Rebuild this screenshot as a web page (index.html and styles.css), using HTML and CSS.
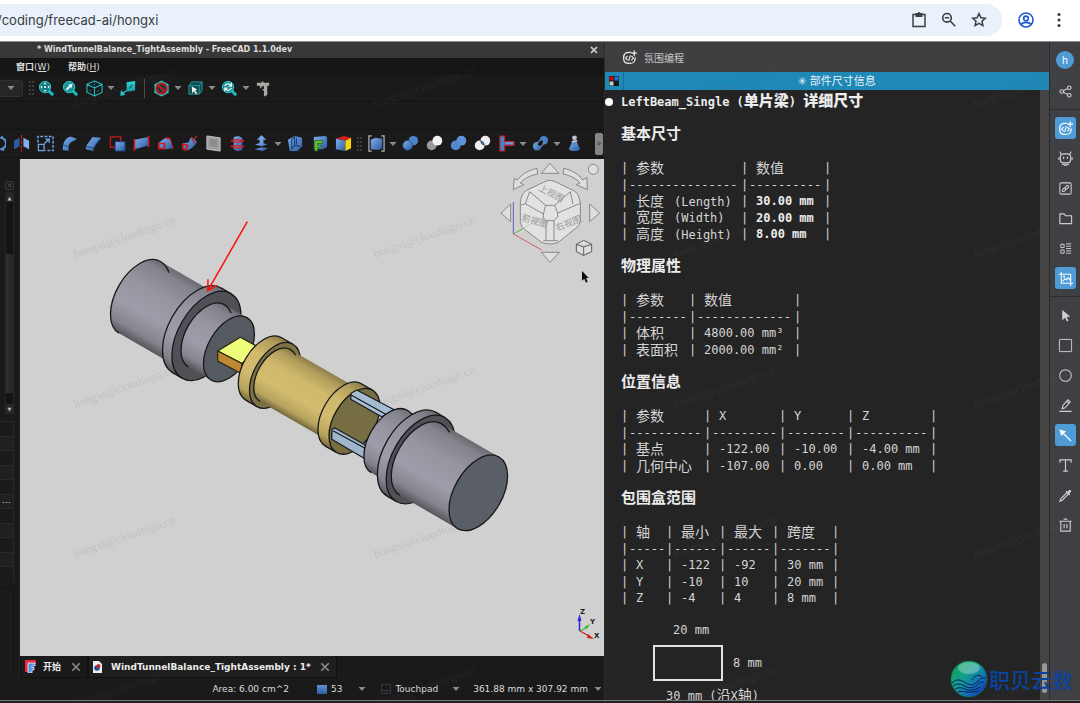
FILE: index.html
```html
<!DOCTYPE html>
<html lang="zh-CN">
<head>
<meta charset="utf-8">
<title>FreeCAD - hongxi</title>
<link rel="stylesheet" href="styles.css">
</head>
<body>
<svg class="defs" aria-hidden="true">
  <defs>
    <linearGradient id="blue" x1="0" y1="0" x2="1" y2="1"><stop offset="0" stop-color="#7fb0ea"/><stop offset="1" stop-color="#2a5ba3"/></linearGradient>
    <linearGradient id="cyan" x1="0" y1="0" x2="0" y2="1"><stop offset="0" stop-color="#2fe0e6"/><stop offset="1" stop-color="#129ba3"/></linearGradient>
    <linearGradient id="steel" x1="0" y1="0" x2="0" y2="1"><stop offset="0" stop-color="#6b6a71"/><stop offset=".1" stop-color="#84838c"/><stop offset=".35" stop-color="#9695a0"/><stop offset=".65" stop-color="#9d9ca8"/><stop offset=".88" stop-color="#85848e"/><stop offset="1" stop-color="#55555a"/></linearGradient>
    <linearGradient id="brass" x1="0" y1="0" x2="0" y2="1"><stop offset="0" stop-color="#8c7d49"/><stop offset=".12" stop-color="#b09d5b"/><stop offset=".35" stop-color="#d0b96c"/><stop offset=".65" stop-color="#d3bc6e"/><stop offset=".88" stop-color="#b7a35e"/><stop offset="1" stop-color="#73683d"/></linearGradient>
    <linearGradient id="globe" x1="0" y1="0" x2="1" y2="1"><stop offset="0" stop-color="#0aa04c"/><stop offset=".4" stop-color="#12a08e"/><stop offset=".7" stop-color="#126cb8"/><stop offset="1" stop-color="#0a1c9c"/></linearGradient>
    <symbol id="code" viewBox="0 0 16 16"><g fill="none" stroke="currentColor" stroke-linecap="round" stroke-linejoin="round"><path stroke-width="1.3" d="M9.5 2.6C5 2 1.7 3 1.7 8.600c0 4.900 2 5.700 6.100 5.700s6.400-.9 6.400-6"/><path stroke-width="1.200" d="M5.600 6.700 3.800 8.600l1.800 1.900M10.400 6.700l1.800 1.900-1.800 1.900M8.700 6.200l-1.400 4.900"/><path stroke-width="1.3" d="M13 1v5M10.600 3.400h5"/></g></symbol>
    <symbol id="arrow" viewBox="0 0 8 6"><path d="M.5 1h7L4 5z" fill="#8c8c8c"/></symbol>
  </defs>
</svg>

<header class="browser">
  <div class="address">
    <input class="url" aria-label="Address" value="/coding/freecad-ai/hongxi">
    <button class="bbtn" aria-label="Clipboard"><svg width="18" height="18" viewBox="0 0 18 18"><path fill="none" stroke="#3c3f43" stroke-width="1.500" d="M3 3.500h12v12H3z"/><path fill="#3c3f43" d="M5.500 2h2.200a1.400 1.400 0 0 1 2.600 0h2.200v4h-7z"/></svg></button>
    <button class="bbtn" aria-label="Zoom out"><svg width="18" height="18" viewBox="0 0 18 18"><g fill="none" stroke="#3c3f43" stroke-width="1.600"><circle cx="7" cy="6.800" r="4.300"/><path d="m10.200 10 5 5.200M4.800 6.800h4.400"/></g></svg></button>
    <button class="bbtn" aria-label="Bookmark"><svg width="18" height="18" viewBox="0 0 18 18"><path fill="none" stroke="#3c3f43" stroke-width="1.500" d="m9 2.600 1.900 4.100 4.400.5-3.300 3 .9 4.400L9 12.400l-3.900 2.200.9-4.400-3.300-3 4.400-.5z"/></svg></button>
  </div>
  <button class="bbtn profile" aria-label="Profile"><svg width="18" height="18" viewBox="0 0 18 18"><g fill="none" stroke="#1b57d0" stroke-width="1.600"><circle cx="9" cy="9" r="7"/><circle cx="9" cy="7.400" r="2.300"/><path d="M3.800 13.400c2.900-2.700 7.500-2.700 10.400 0"/></g></svg></button>
  <button class="bbtn more" aria-label="Menu"><svg width="6" height="18" viewBox="0 0 6 18"><g fill="#3c3f43"><circle cx="3" cy="3.500" r="1.600"/><circle cx="3" cy="9" r="1.600"/><circle cx="3" cy="14.500" r="1.600"/></g></svg></button>
</header>

<main class="workspace">
  <section class="cad">
    <div class="titlebar"><h1>* WindTunnelBalance_TightAssembly - FreeCAD 1.1.0dev</h1><button class="close" aria-label="Close window"><svg width="8" height="8" viewBox="0 0 8 8"><path d="m1 1 6 6M7 1 1 7" stroke="#d6d6d6" stroke-width="1.600"/></svg></button></div>
    <nav class="menubar"><button>窗口<span>(<u>W</u>)</span></button><button>帮助<span>(<u>H</u>)</span></button></nav>

    <div class="toolbar first">
      <button class="combo" aria-label="Workbench"><svg width="8" height="6"><use href="#arrow"/></svg></button>
      <i class="grip"></i>
      <button class="tool" aria-label="Fit all"><svg viewBox="0 0 18 18"><path d="m10 10 6 6" stroke="#1ab9c0" stroke-width="3.200"/><circle cx="7.500" cy="7.500" r="6" fill="#15787c" stroke="#27d3da"/><path d="m7.500 2.500 1.700 2H5.800zM7.500 12.500l1.700-2H5.800zM2.500 7.500l2-1.700v3.400zM12.500 7.500l-2-1.700v3.400zM6.500 6.500h2v2h-2z" fill="#e8f6f6"/></svg></button>
      <button class="tool" aria-label="Fit selection"><svg viewBox="0 0 18 18"><path d="m10 10 6 6" stroke="#1ab9c0" stroke-width="3.200"/><circle cx="7.500" cy="7.500" r="6" fill="#1f9298" stroke="#27d3da"/><path d="M11 4 6.500 5l1.200 1.200L4 9.500 5.500 11l3.500-3.500 1.200 1.200z" fill="#f2fafa"/></svg></button>
      <button class="tool" aria-label="Standard view"><svg viewBox="0 0 18 18"><path fill="none" stroke="#22b7bd" stroke-width="1.200" stroke-linejoin="round" d="M9 1 17 4.500v8.500L9 17 1 13V4.500zM1 4.500 9 8.500l8-4M9 8.500V17"/><path stroke="#22b7bd" stroke-dasharray="1.500 1.500" d="M9 1v8M4 10.500l2 2M12 12l2-1.500"/></svg></button>
      <button class="drop" aria-label="View options"><svg width="8" height="6"><use href="#arrow"/></svg></button>
      <button class="tool" aria-label="Align to selection"><svg viewBox="0 0 18 18"><path d="M7 2.500 16 1v10l-9 1.500z" fill="url(#cyan)"/><path d="m10 9 3-4" stroke="#0d5c60" stroke-width="1.300"/><path d="M7 11 3 14M1.500 12l3 3.500-3.500.5z" stroke="#26cbd2" stroke-width="1.300" fill="#26cbd2"/></svg></button>
      <i class="rule"></i>
      <button class="tool" aria-label="Draw style"><svg viewBox="0 0 18 18"><path d="m9 .500 7.500 4v9L9 17.500l-7.500-4v-9z" fill="#22c9d0"/><circle cx="9" cy="9" r="5.500" fill="#22393b" stroke="#bd1c1c" stroke-width="2.200"/><path d="m5 5 8 8" stroke="#bd1c1c" stroke-width="2.200"/></svg></button>
      <button class="drop" aria-label="Style options"><svg width="8" height="6"><use href="#arrow"/></svg></button>
      <button class="tool" aria-label="Bounding box"><svg viewBox="0 0 18 18"><path d="M5 2h11v9l-3 4H2V6z" fill="#16494c" stroke="#219ca2"/><path d="M2 6h11l3-4M13 6v9" fill="none" stroke="#219ca2"/><path d="m5 7 6 3-2.500.8L11 14l-1.500 1-2.200-3L5.500 14z" fill="#f4f4f4"/></svg></button>
      <button class="drop" aria-label="Selection options"><svg width="8" height="6"><use href="#arrow"/></svg></button>
      <button class="tool" aria-label="Sync view"><svg viewBox="0 0 18 18"><path d="m10 10 6 6" stroke="#1ab9c0" stroke-width="3.200"/><circle cx="7.500" cy="7.500" r="6" fill="#1c8b90" stroke="#27d3da"/><path d="M4 6.500c1-3 5-3 6.500-1M11 8.500c-1 3-5 3-6.500 1M11 3v3.500H8M4 12V8.500h3" fill="none" stroke="#eaf8f8" stroke-width="1.300"/></svg></button>
      <button class="drop" aria-label="Sync options"><svg width="8" height="6"><use href="#arrow"/></svg></button>
      <button class="tool" aria-label="Measure"><svg viewBox="0 0 18 18"><path d="M2 3h5V1.500h2V3h6v3h-2v10l-3.500 1.500V11H8V9.500h1.500v-3H7V8l-1.500 1L5 6H2z" fill="#aaa9a4"/></svg></button>
    </div>
    <div class="toolbar blank"></div>
    <div class="toolbar third">
      <button class="tool" aria-label="Revolve"><svg viewBox="0 0 18 18"><path d="M12 3a6 6 0 1 1 0 12M12 15l4 1M12 3l3-1" fill="none" stroke="#5d95dc" stroke-width="2"/></svg></button>
      <button class="tool" aria-label="Mirror"><svg viewBox="0 0 18 18"><path d="m1 6 6-3v9l-6 3z" fill="#2d5c9e"/><path d="m11 3 6 3v9l-6-3z" fill="#7fb0ea"/><path d="M9 0v18" stroke="#b91c1c" stroke-width="1.500" stroke-dasharray="4 1.500"/></svg></button>
      <button class="tool" aria-label="Scale"><svg viewBox="0 0 18 18"><path d="M1 8V1.500h16v15H9" fill="none" stroke="#6da2e4" stroke-width="1.600" stroke-dasharray="3 1.500"/><path d="M1.500 10h6v6.500h-6zM8 9l4-4M9 4.500h4v4" fill="none" stroke="#6da2e4" stroke-width="1.400"/></svg></button>
      <button class="tool" aria-label="Fillet"><svg viewBox="0 0 18 18"><path d="M2 16V12C3 7 5 3 10 1.500L17 4l-3 2c-4 1-6 4-6 7v4z" fill="url(#blue)"/><path d="M2 11c2 0 4 0 6 2" fill="none" stroke="#1c4581"/></svg></button>
      <button class="tool" aria-label="Chamfer"><svg viewBox="0 0 18 18"><path d="M1 12 8 2l9 1-3 4-5 7v3l-8-2z" fill="url(#blue)"/><path d="m1 12 8 2 6-9" fill="none" stroke="#1c4581"/></svg></button>
      <button class="tool" aria-label="Make face"><svg viewBox="0 0 18 18"><path d="M1.500 2h11v11h-11z" fill="none" stroke="#c01a20" stroke-width="1.400"/><path d="M6.500 7H17v10H6.500z" fill="url(#blue)" stroke="#183e75"/></svg></button>
      <button class="tool" aria-label="Ruled surface"><svg viewBox="0 0 18 18"><path d="m2 5 14-3v9L2 15z" fill="url(#blue)"/><path d="M1.500 4v13M16.500 1v12" stroke="#cb1b22" stroke-width="1.700"/></svg></button>
      <button class="tool" aria-label="Loft"><svg viewBox="0 0 18 18"><path d="m2 8 7-5 5 1 3 10-8 1-7-1z" fill="url(#blue)"/><path d="M2 9h6v5.500H2zM9 3l5 1" fill="none" stroke="#cb1b22" stroke-width="1.800"/><path d="m14 4 3 11" stroke="#cb1b22"/></svg></button>
      <button class="tool" aria-label="Sweep"><svg viewBox="0 0 18 18"><path d="m1 9 7-1c1-2 1-4 3-6l6 5c-2 4-5 7-9 9l-6-1z" fill="url(#blue)"/><path d="m2 10 5 1-2 5-3-2z" fill="none" stroke="#cb1b22" stroke-width="2"/><path d="m11 3 4 6M14 4l3-3" stroke="#cb1b22" stroke-width="1.300"/></svg></button>
      <button class="tool" aria-label="Section"><svg viewBox="0 0 18 18"><path d="m2 1 14 2v14L2 15z" fill="#a0a0a0" stroke="#c3c3c3"/><path d="m5 4 8 1v8l-8-1z" fill="#8c8c8c"/></svg></button>
      <button class="tool" aria-label="Cross sections"><svg viewBox="0 0 18 18"><path d="m5 2 5-1 4 2v13l-5 1-4-2z" fill="url(#blue)"/><path d="m2 6 6-1 8 1-7 2zM2 12l6-1 8 1-7 2z" fill="none" stroke="#ce2128" stroke-width="1.400"/></svg></button>
      <button class="tool" aria-label="Offset"><svg viewBox="0 0 18 18"><path d="m9 0 5 5h-3v4H7V5H4z" fill="#72a5e4"/><path d="m2 10 7-2 6 2-6 2zM2 15l7-2 7 1-6 3z" fill="url(#blue)"/></svg></button>
      <button class="drop" aria-label="Offset options"><svg width="8" height="6"><use href="#arrow"/></svg></button>
      <button class="tool" aria-label="Thickness"><svg viewBox="0 0 18 18"><path d="m1 5 7-4 8 2v9l-5 5H3z" fill="url(#blue)"/><path d="m5 5 3-3v9l-3 4zM8 11l6 1M10 3v7" fill="none" stroke="#1b4279" stroke-width="1.200"/></svg></button>
      <button class="tool" aria-label="Projection"><svg viewBox="0 0 18 18"><path d="m3 2 12-1 2 1v11l-5 2H3z" fill="url(#blue)"/><path d="M4 17V6h8v3H7v2h4v2H7v4z" fill="#61ca24" stroke="#225b10" stroke-width=".700"/></svg></button>
      <button class="tool" aria-label="Color per face"><svg viewBox="0 0 18 18"><path d="m1 4 8-3 8 2-6 3z" fill="#d81b1b"/><path d="m1 4 10 2v11L1 15z" fill="url(#blue)"/><path d="m11 6 6-3v11l-6 3z" fill="#f5d20a"/></svg></button>
      <i class="grip"></i>
      <button class="tool" aria-label="Compound"><svg viewBox="0 0 18 18"><path d="m3 5 5-2 7 1v10l-4 2-8-1z" fill="url(#blue)"/><path d="M4 1H1v16h3M14 1h3v16h-3" fill="none" stroke="#b4b4b4" stroke-width="1.300"/></svg></button>
      <button class="drop" aria-label="Compound options"><svg width="8" height="6"><use href="#arrow"/></svg></button>
      <button class="tool" aria-label="Boolean"><svg viewBox="0 0 18 18"><circle cx="12" cy="6" r="5" fill="#4f83c8"/><circle cx="6" cy="11" r="5.200" fill="url(#blue)" stroke="#1a3f76" stroke-width=".700"/></svg></button>
      <button class="tool" aria-label="Cut"><svg viewBox="0 0 18 18"><circle cx="6" cy="11" r="5.200" fill="#999"/><circle cx="12" cy="6" r="5.200" fill="#f1f1f1"/></svg></button>
      <button class="tool" aria-label="Union"><svg viewBox="0 0 18 18"><circle cx="12" cy="6" r="5.200" fill="#5e93d8"/><circle cx="6" cy="11" r="5.200" fill="#5488cd"/></svg></button>
      <button class="tool" aria-label="Intersection"><svg viewBox="0 0 18 18"><circle cx="6" cy="11" r="5.200" fill="#eee"/><circle cx="12" cy="6" r="5.200" fill="#eee"/><path d="M7 6a5.200 5.200 0 0 1 4 5A5.200 5.200 0 0 1 7 6z" fill="#4a80c8" stroke="#333" stroke-width=".700"/></svg></button>
      <button class="tool" aria-label="Join"><svg viewBox="0 0 18 18"><path d="M2 1h5v6h10v4H7v6H2z" fill="#4a80c8" stroke="#c61c22" stroke-width="1.200"/><path d="M8 8.500h8" stroke="#8bb8ee"/></svg></button>
      <button class="drop" aria-label="Join options"><svg width="8" height="6"><use href="#arrow"/></svg></button>
      <button class="tool" aria-label="Split"><svg viewBox="0 0 18 18"><circle cx="12.500" cy="5.500" r="4.500" fill="#4a80c8"/><circle cx="5.500" cy="12" r="4.500" fill="url(#blue)"/><circle cx="9" cy="9" r="3" fill="#222" stroke="#6da2e4"/><path d="m7 11 4-5" stroke="#111" stroke-width="2"/></svg></button>
      <button class="drop" aria-label="Split options"><svg width="8" height="6"><use href="#arrow"/></svg></button>
      <button class="tool" aria-label="Check geometry"><svg viewBox="0 0 18 18"><path d="M7 6h4l4 9-3 2H6l-3-2z" fill="url(#blue)"/><circle cx="9" cy="3" r="2.600" fill="#bdc3c9"/><path d="m6 7 6-1" stroke="#d9d9d9" stroke-width="1.500"/></svg></button>
      <button class="extend" aria-label="More tools">»</button>
    </div>

    <div class="stage">
      <aside class="dock">
        <button class="dockclose" aria-label="Close panel">×</button>
        <div class="scroll"><button aria-label="Scroll up">▲</button><i class="thumb"></i><button aria-label="Scroll down">▼</button></div>
        <div class="props"><i></i><i></i><i></i><i></i><i></i><i>…</i><i></i><i></i><i></i><i></i><i></i></div>
        <div class="dockfoot"></div>
      </aside>
      <div class="viewcol">
        <svg class="view" viewBox="20 159 584 497" role="img" aria-label="Wind tunnel balance assembly">
          <g transform="translate(478.3 492.800) rotate(30)" stroke-linejoin="round">
            <path fill="url(#steel)" d="M-390.900-41.400A23.900 41.400 0 0 0-390.900 41.400H-313V-41.400z"/>
            <path fill="none" stroke="#17171a" stroke-width="1.300" d="M-378-36Q-384-41.400-390.900-41.400A23.900 41.400 0 0 0-390.900 41.400"/>
            <path fill="url(#steel)" d="M-324.800-48.800A28.200 48.800 0 0 0-324.800 48.800H-313.900V-48.800z"/>
            <path fill="none" stroke="#17171a" stroke-width="1.300" d="M-313.900-48.800H-324.800A28.200 48.800 0 0 0-324.800 48.800H-313.900"/>
            <ellipse cx="-313.900" rx="28.200" ry="48.800" fill="#505156" stroke="#17171a" stroke-width="1.300"/>
            <path fill="url(#steel)" d="M-313.900-36A20.800 36 0 0 0-313.900 36H-287.900V-36z"/>
            <path fill="none" stroke="#17171a" stroke-width="1.300" d="M-304-32Q-309-36-313.900-36A20.800 36 0 0 0-313.900 36"/>
            <ellipse cx="-287.900" rx="20.800" ry="36" fill="#555a61" stroke="#17171a" stroke-width="1.300"/>
          </g>
          <g stroke="#252411" stroke-width="1.200" stroke-linejoin="round"><path d="m217.700 351 22.600-13.700 20 10.700-18.300 15.500z" fill="#efff7b"/><path d="m217.700 351 24.300 12.500V374l-24.300-13z" fill="#bd8935"/></g>
          <g transform="translate(478.3 492.800) rotate(30)">
            <path fill="url(#brass)" d="M-247.800-36A20.800 36 0 0 0-247.800 36H-234.800V-36z"/>
            <path fill="none" stroke="#17171a" stroke-width="1.300" d="M-234.800-36H-247.800A20.800 36 0 0 0-247.800 36H-234.800"/>
            <ellipse cx="-234.800" rx="20.800" ry="36" fill="#7d7244" stroke="#17171a" stroke-width="1.300"/>
            <path fill="url(#brass)" d="M-234.800-30A17.300 30 0 0 0-234.800 30H-150V-30z"/>
            <path fill="none" stroke="#17171a" stroke-width="1.300" d="M-227-28Q-230-30-234.800-30A17.300 30 0 0 0-234.800 30"/>
            <path fill="url(#brass)" d="M-155.800-36A20.800 36 0 0 0-155.800 36H-143V-36z"/>
            <path fill="none" stroke="#17171a" stroke-width="1.300" d="M-143-36H-155.800A20.800 36 0 0 0-155.800 36H-143"/>
            <ellipse cx="-143" rx="20.800" ry="36" fill="#766d42" stroke="#17171a" stroke-width="1.300"/>
          </g>
          <g stroke="#18191c" stroke-width="1.200" stroke-linejoin="round"><path d="m356.700 390 38 20-13 6.700-31-17.400.3-6z" fill="#a6bed4"/><path d="m332 429.300 3-1.300 32 18v14l-35.300-20.700z" fill="#9eb7cd"/><path d="m351 395 37 20.500M333 430.700l33 18" fill="none"/></g>
          <g transform="translate(478.3 492.800) rotate(30)">
            <path fill="url(#steel)" d="M-102.700-36A20.800 36 0 0 0-102.700 36H-70V-36z"/>
            <path fill="none" stroke="#17171a" stroke-width="1.300" d="M-92-32Q-97-36-102.700-36A20.800 36 0 0 0-102.700 36"/>
            <path fill="url(#steel)" d="M-76.800-48.500A28.200 48.500 0 0 0-76.800 48.500H-66.700V-48.500z"/>
            <path fill="none" stroke="#17171a" stroke-width="1.300" d="M-66.700-48.500H-76.800A28.200 48.500 0 0 0-76.800 48.500H-66.700"/>
            <ellipse cx="-66.700" rx="28" ry="48.500" fill="#505156" stroke="#17171a" stroke-width="1.300"/>
            <path fill="url(#steel)" d="M-66.700-41.400A23.900 41.400 0 0 0-66.700 41.400H0V-41.400z"/>
            <path fill="none" stroke="#17171a" stroke-width="1.300" d="M-55-38Q-61-41.400-66.700-41.400A23.900 41.400 0 0 0-66.700 41.400"/>
            <ellipse rx="23.900" ry="41.400" fill="#5a5e66" stroke="#17171a" stroke-width="1.300"/>
          </g>
          <path d="M247.300 221.700 207.800 290.700M208 279.300l-.2 11.400 9.500-5.400" fill="none" stroke="#fb1010" stroke-width="1.500"/>
          <g transform="translate(490 155) scale(.33333)" stroke="#777" stroke-width="2.500" fill="#dedede" stroke-linejoin="round">
            <path d="m180 25 27 30h-53zM180 322l-26-30h54zM33 174l29-27v53zM329 174l-30-27v53z"/><circle cx="310" cy="43" r="15"/>
            <path d="M141 40C115 46 95 58 82 75l-9-5-3 34 31-15-10-5c11-13 27-22 52-27zM221 40c26 6 46 18 57 35l13-7 1 36-33-15 11-5c-11-13-27-22-51-27z"/>
            <path fill="#e2e2e2" d="m110 106 56-27q14-6 28 0l57 28q16 8 20 38v55q-3 12-14 20l-52 42q-25 10-50 0l-50-38q-12-8-14-24v-55q2-30 19-39z"/>
            <path fill="none" d="m119 110 48 41h27l47-41M106 146l54 31 7-26M271 145l-68 29-9-23M160 177v12l8 8h24l11-12v-11M168 197v60M192 197v58M93 150l13-4 13-36M241 110l8 38M160 257h44"/>
            <path stroke="#4a4ac0" d="M70 141v96"/><path stroke="#3fae3f" d="m70 237 30-17"/><path stroke="#a3d9a3" d="m100 220 54-31"/><path stroke="#d04545" d="m70 237 85 48"/>
            <path d="m281 256 24 12v22l-24 11-22-11v-22zM259 268l22 8 24-8M281 276v25" stroke="#444"/>
            <path d="M276 348v29l7-6 5 12 5-3-5-11h8z" fill="#090909" stroke="none"/>
          </g>
          <g class="face"><text transform="translate(538 190) rotate(27)">上视图</text><text transform="translate(521 220) rotate(17)">前视图</text><text transform="translate(557 231) rotate(-21)">右视图</text></g>
          <path d="M579.500 631v-12" stroke="#2a2ad0" stroke-width="1.500"/><path d="m577.500 621 2-7 2 7z" fill="#2a2ad0"/><path d="m580 631 6-3" stroke="#30c030" stroke-width="1.300"/><path d="m584 627 6-3-3 5z" fill="#30c030"/><path d="m580 631 9 5" stroke="#d02020" stroke-width="1.300"/><path d="m588 634 6 5-7-1z" fill="#d02020"/>
          <g class="axes"><text x="580" y="614">Z</text><text x="590" y="624">Y</text><text x="594" y="638">X</text></g>
        </svg>
        <div class="tabs">
          <div class="tab start"><svg width="12" height="13" viewBox="0 0 12 13"><path d="M1 0h11v4H6v8H1z" fill="#e8283d"/><path d="M4 3h7v3H8v1.500h2V10H8v3H4z" fill="#4d94e4" stroke="#fff" stroke-width=".700"/></svg><button class="tabname">开始</button><button class="tabx" aria-label="Close tab"><svg width="10" height="10" viewBox="0 0 8 8"><path d="m1 1 6 6M7 1 1 7" stroke="#888" stroke-width="1.400"/></svg></button></div>
          <div class="tab doc"><svg width="9" height="12" viewBox="0 0 9 12"><path d="M0 0h6l3 3v9H0z" fill="#eee"/><circle cx="4" cy="7" r="2.800" fill="#214c9a"/><circle cx="5.500" cy="5" r="2" fill="#cf2328"/></svg><button class="tabname">WindTunnelBalance_TightAssembly : 1*</button><button class="tabx" aria-label="Close tab"><svg width="10" height="10" viewBox="0 0 8 8"><path d="m1 1 6 6M7 1 1 7" stroke="#888" stroke-width="1.400"/></svg></button></div>
        </div>
      </div>
    </div>
    <footer class="status">
      <span class="area">Area: 6.00 cm^2</span>
      <button class="stat notes"><i class="chip"></i>53<svg width="8" height="6"><use href="#arrow"/></svg></button>
      <button class="stat pad"><svg width="10" height="10" viewBox="0 0 10 10"><path d="M.500.500h9v9h-9zM.500 6.500h9M5 6.500v3" fill="none" stroke="#343a40"/></svg>Touchpad<svg width="8" height="6"><use href="#arrow"/></svg></button>
      <button class="stat dims">361.88 mm x 307.92 mm<svg width="8" height="6"><use href="#arrow"/></svg></button>
    </footer>
  </section>

  <section class="panel">
    <h2 class="panelhead"><svg width="15" height="15"><use href="#code"/></svg>氛围编程</h2>
    <div class="panelbar"><button class="swatch" aria-label="Sessions"><svg width="10" height="10" viewBox="0 0 10 10"><path d="M0 0h10v10H0z" fill="#101a20"/><path d="M.500.500h4v4h-4z" fill="#c40a0a"/><path d="M5.500.500h4v4h-4z" fill="#2077c8"/><path d="M.500 5.500h4v4h-4z" fill="#ccc"/></svg></button><span>✳ 部件尺寸信息</span></div>
    <div class="termwrap">
      <article class="term">
        <h3 class="part"><i class="bullet"></i><span>LeftBeam_Single (<b>单片梁</b>) <b>详细尺寸</b></span></h3>
        <h4>基本尺寸</h4>
        <table>
          <colgroup><col class="bar"><col class="w112"><col class="bar"><col class="w75"><col class="bar"></colgroup>
          <tr><td>|</td><th>参数</th><td>|</td><th>数值</th><td>|</td></tr>
          <tr class="dash"><td>|</td><td>---------------</td><td>|</td><td>----------</td><td>|</td></tr>
          <tr><td>|</td><th>长度<span>(Length)</span></th><td>|</td><td class="v strong">30.00 mm</td><td>|</td></tr>
          <tr><td>|</td><th>宽度<span>(Width)</span></th><td>|</td><td class="v strong">20.00 mm</td><td>|</td></tr>
          <tr><td>|</td><th>高度<span>(Height)</span></th><td>|</td><td class="v strong">8.00 mm</td><td>|</td></tr>
        </table>
        <h4>物理属性</h4>
        <table>
          <colgroup><col class="bar"><col class="w60"><col class="bar"><col class="w97"><col class="bar"></colgroup>
          <tr><td>|</td><th>参数</th><td>|</td><th>数值</th><td>|</td></tr>
          <tr class="dash"><td>|</td><td>--------</td><td>|</td><td>-------------</td><td>|</td></tr>
          <tr><td>|</td><th>体积</th><td>|</td><td class="v">4800.00 mm³</td><td>|</td></tr>
          <tr><td>|</td><th>表面积</th><td>|</td><td class="v">2000.00 mm²</td><td>|</td></tr>
        </table>
        <h4>位置信息</h4>
        <table>
          <colgroup><col class="bar"><col class="w75"><col class="bar"><col class="w67"><col class="bar"><col class="w60"><col class="bar"><col class="w75"><col class="bar"></colgroup>
          <tr><td>|</td><th>参数</th><td>|</td><th class="en">X</th><td>|</td><th class="en">Y</th><td>|</td><th class="en">Z</th><td>|</td></tr>
          <tr class="dash"><td>|</td><td>----------</td><td>|</td><td>---------</td><td>|</td><td>--------</td><td>|</td><td>----------</td><td>|</td></tr>
          <tr><td>|</td><th>基点</th><td>|</td><td class="v">-122.00</td><td>|</td><td class="v">-10.00</td><td>|</td><td class="v">-4.00 mm</td><td>|</td></tr>
          <tr><td>|</td><th>几何中心</th><td>|</td><td class="v">-107.00</td><td>|</td><td class="v">0.00</td><td>|</td><td class="v">0.00 mm</td><td>|</td></tr>
        </table>
        <h4>包围盒范围</h4>
        <table>
          <colgroup><col class="bar"><col class="w37"><col class="bar"><col class="w45"><col class="bar"><col class="w45"><col class="bar"><col class="w52"><col class="bar"></colgroup>
          <tr><td>|</td><th>轴</th><td>|</td><th>最小</th><td>|</td><th>最大</th><td>|</td><th>跨度</th><td>|</td></tr>
          <tr class="dash"><td>|</td><td>-----</td><td>|</td><td>------</td><td>|</td><td>------</td><td>|</td><td>-------</td><td>|</td></tr>
          <tr><td>|</td><th class="en">X</th><td>|</td><td class="v">-122</td><td>|</td><td class="v">-92</td><td>|</td><td class="v">30 mm</td><td>|</td></tr>
          <tr><td>|</td><th class="en">Y</th><td>|</td><td class="v">-10</td><td>|</td><td class="v">10</td><td>|</td><td class="v">20 mm</td><td>|</td></tr>
          <tr><td>|</td><th class="en">Z</th><td>|</td><td class="v">-4</td><td>|</td><td class="v">4</td><td>|</td><td class="v">8 mm</td><td>|</td></tr>
        </table>
        <figure class="plan"><span class="top">20 mm</span><div class="row"><div class="rect"></div><span>8 mm</span></div><figcaption>30 mm (<b>沿</b>X<b>轴</b>)</figcaption></figure>
      </article>
      <div class="gutter"><i></i></div>
    </div>
  </section>

  <aside class="rail">
    <div class="group"><button class="avatar">h</button>
      <button aria-label="Share"><svg viewBox="0 0 16 16"><g fill="none" stroke="currentColor" stroke-width="1.200"><circle cx="4" cy="8" r="1.900"/><circle cx="12" cy="4" r="1.900"/><circle cx="12" cy="12" r="1.900"/><path d="m5.700 7.200 4.600-2.300M5.700 8.800l4.600 2.300"/></g></svg></button></div>
    <div class="group">
      <button class="on" aria-label="Vibe coding"><svg><use href="#code"/></svg></button>
      <button aria-label="Assistant"><svg viewBox="0 0 16 16"><g fill="none" stroke="currentColor" stroke-width="1.200" stroke-linecap="round"><rect x="2.500" y="3" width="11" height="9.500" rx="3.500"/><path d="M3 3 2.300 1M13 3l.7-2M1 7v2M15 7v2M6 6.500v1.500M10 6.500v1.500M4.500 14h7M6.500 15.700h3"/></g></svg></button>
      <button aria-label="Link"><svg viewBox="0 0 16 16"><g fill="none" stroke="currentColor" stroke-width="1.100"><rect x="2" y="2" width="12" height="12" rx="1.500"/><path d="M7.500 6.500 9.700 4.800q2-.5 1.600 1.700L9.500 8.500H7.200M8.500 9.500l-2.200 1.700q-2 .5-1.600-1.700l1.800-2h2.300"/></g></svg></button>
      <button aria-label="Files"><svg viewBox="0 0 16 16"><path d="M2 3h4.500l1.500 2h6.500v8.500H2z" fill="none" stroke="currentColor" stroke-width="1.200" stroke-linejoin="round"/></svg></button>
      <button aria-label="List"><svg viewBox="0 0 16 16"><path d="M3 3.500h3.500V7H3zM3 9.500h3.500V13H3zM8.500 3h5.500M8.500 5.500h5.500M8.500 8h5.500M8.500 10.500h5.500M8.500 13h5.500" fill="none" stroke="currentColor"/></svg></button>
      <button class="on" aria-label="Annotate"><svg viewBox="0 0 16 16"><path d="M3.500 1v12H16M1 3.500h12.500V16M5 11l2.500-3 1.500 1.500 2-2.500 2 3" fill="none" stroke="currentColor" stroke-width="1.100"/><circle cx="6.500" cy="6" r="1" fill="currentColor"/></svg></button>
    </div>
    <div class="group">
      <button aria-label="Select"><svg viewBox="0 0 16 16"><path d="m4.500 2 8.500 7-3.700.6 1.900 4-1.700.7-1.900-4L4.500 13z" fill="currentColor"/></svg></button>
      <button aria-label="Rectangle"><svg viewBox="0 0 16 16"><rect x="1.500" y="1.500" width="13" height="13" rx=".500" fill="none" stroke="currentColor" stroke-width="1"/></svg></button>
      <button aria-label="Circle"><svg viewBox="0 0 16 16"><circle cx="8" cy="8" r="6.200" fill="none" stroke="currentColor" stroke-width="1.100"/></svg></button>
      <button aria-label="Pen"><svg viewBox="0 0 16 16"><path d="M1.500 14.200h13M4.500 11.500l.8-3.500L10.500 2l2.500 2-5.500 6.500zM9 3.500l2.700 2.200" fill="none" stroke="currentColor" stroke-width="1.200"/></svg></button>
      <button class="on" aria-label="Arrow"><svg viewBox="0 0 16 16"><path d="m5 5 9 9" stroke="currentColor" stroke-width="1.400"/><path d="m1.500 1.500 7 2-5 5z" fill="currentColor"/></svg></button>
      <button aria-label="Text"><svg viewBox="0 0 16 16"><path d="M2 5V2h12v3M8 2v12M5.500 14h5" fill="none" stroke="currentColor" stroke-width="1.200"/></svg></button>
      <button aria-label="Color picker"><svg viewBox="0 0 16 16"><path d="M9.500 5 3 11.500 2 14l2.500-1L11 6.500z" fill="none" stroke="currentColor" stroke-width="1.200"/><path d="m8 4 1-1 1.200 1L12 2q2-.5 2 2l-2 1.800L13 7l-1 1z" fill="currentColor"/></svg></button>
      <button aria-label="Delete"><svg viewBox="0 0 16 16"><path d="M1.500 3.500h13M6 1.200h4M3 3.500V14h10V3.500M6.500 6.500v4.500M9.500 6.500v4.500" fill="none" stroke="currentColor" stroke-width="1.200"/></svg></button>
    </div>
  </aside>
</main>
<div class="edge"></div>

<div class="brand"><svg width="38" height="38" viewBox="0 0 38 38"><circle cx="19" cy="19" r="18" fill="url(#globe)" stroke="#16783d" stroke-width=".500"/><ellipse cx="19" cy="8" rx="11" ry="6" fill="#fff" opacity=".3"/><g fill="none" stroke="#071f52" stroke-width="1"><path d="M2 23c5-5 9-3 14 0s8 2 12-2 6-3 8-3"/><path d="M3 26c6-4 9-1 14 1s8 0 11-3 5-2 6-1"/><path d="M5 29c6-3 9 0 13 1s8-1 12-3"/><path d="M8 32c5-2 9 2 20-1"/><path d="M22 20c1-4 8-7 11-2"/></g></svg><span>职贝云数</span></div>

<div class="marks" aria-hidden="true">
  <span>hongxi@cloudtogo.cn</span><span>hongxi@cloudtogo.cn</span><span>hongxi@cloudtogo.cn</span><span>hongxi@cloudtogo.cn</span>
  <span>hongxi@cloudtogo.cn</span><span>hongxi@cloudtogo.cn</span><span>hongxi@cloudtogo.cn</span><span>hongxi@cloudtogo.cn</span>
  <span>hongxi@cloudtogo.cn</span><span>hongxi@cloudtogo.cn</span><span>hongxi@cloudtogo.cn</span><span>hongxi@cloudtogo.cn</span>
  <span>hongxi@cloudtogo.cn</span><span>hongxi@cloudtogo.cn</span><span>hongxi@cloudtogo.cn</span><span>hongxi@cloudtogo.cn</span>
  <span>hongxi@cloudtogo.cn</span><span>hongxi@cloudtogo.cn</span><span>hongxi@cloudtogo.cn</span><span>hongxi@cloudtogo.cn</span>
</div>
</body>
</html>
```

FILE: styles.css
```css
* { box-sizing: border-box; }
body {
  margin: 0;
  height: 100vh;
  display: flex;
  flex-direction: column;
  overflow: hidden;
  position: relative;
  background: #1a1a1a;
  color: #dcdcdc;
  font-family: "DejaVu Sans", "Noto Sans CJK SC", sans-serif;
  font-size: 9px;
}
button { border: 0; padding: 0; margin: 0; background: none; color: inherit; font: inherit; display: flex; align-items: center; justify-content: center; }
svg { display: block; flex: none; }
h1, h2, h3, h4, figure { margin: 0; }
.defs { position: absolute; width: 0; height: 0; }

/* Browser bar */
.browser { height: 42px; flex: none; display: flex; align-items: flex-start; padding-top: 4px; background: #fff; border-bottom: 1px solid #8c8e90; }
.address { flex: 1; height: 32px; display: flex; align-items: center; gap: 12px; padding-right: 14px; background: #e9f1fa; border-radius: 0 16px 16px 0; }
.url { flex: 1; min-width: 0; border: 0; padding: 0; margin-left: -3px; background: none; color: #3a3d41; font: 13px Inter, Roboto, sans-serif; outline: none; }
.bbtn { width: 18px; height: 32px; }
.profile { margin: 0 21px 0 15px; }
.more { width: 6px; margin-right: 18px; }

.workspace { flex: 1; min-height: 0; display: grid; grid-template-columns: minmax(0, 605fr) minmax(0, 444fr) 31px; }
.edge { height: 3px; flex: none; background: #241f21; border-top: 1px solid #77797b; }

/* CAD window */
.cad { display: flex; flex-direction: column; min-height: 0; background: #1a1a1a; border-right: 1px solid #2c2c2c; }
.titlebar { height: 16px; flex: none; display: flex; align-items: center; justify-content: space-between; padding: 0 6px 0 37px; background: #383838; }
.titlebar h1 { font-size: 8px; font-weight: 700; line-height: 16px; }
.menubar { height: 17px; flex: none; display: flex; gap: 18px; padding-left: 16px; background: #151515; }
.menubar button { font-size: 9px; font-weight: 700; }
.menubar span { font-weight: 400; }
.toolbar { flex: none; display: flex; align-items: center; height: 28px; border-bottom: 1px solid #131313; overflow: hidden; }
.first { height: 27px; }
.third { margin-bottom: 1px; }
.tool { width: 24px; height: 24px; flex: none; }
.third .tool:first-child { margin-left: -15px; }
.tool svg { width: 17px; height: 17px; }
.drop { width: 10px; height: 24px; flex: none; }
.combo { width: 23px; height: 17px; background: #262626; border: 1px solid #303030; border-left: 0; border-radius: 0 3px 3px 0; margin-right: 6px; }
.grip { width: 5px; height: 14px; flex: none; border-left: 2px dotted #3d3d3d; border-right: 2px dotted #3d3d3d; }
.third .grip { margin: 0 2px; }
.rule { width: 1px; height: 19px; margin: 0 4px; background: #4c4c4c; }
.extend { width: 8px; height: 22px; margin: 0 1px 0 auto; background: #858585; border-radius: 2px; color: #333; font-size: 8px; }

.stage { flex: 1; min-height: 0; display: grid; grid-template-columns: 20px minmax(0, 1fr); }
.viewcol { display: flex; flex-direction: column; min-height: 0; }
.view { flex: 1; min-height: 0; width: 100%; background: #d0d0d0; }
.face text { font: 9px "Noto Sans CJK SC", sans-serif; fill: #999; }
.axes text { font: 700 7px "DejaVu Sans", sans-serif; fill: #222; }

.dock { display: flex; flex-direction: column; min-height: 0; padding: 22px 5px 0 0; border-right: 1px solid #222; }
.dockclose { align-self: flex-end; width: 9px; height: 9px; border: 1px solid #3b3b3b; border-radius: 2px; color: #555; font-size: 8px; }
.scroll { align-self: flex-end; width: 9px; height: 222px; display: flex; flex-direction: column; justify-content: space-between; margin-top: 2px; background: #141414; border: 1px solid #252525; }
.scroll button { height: 9px; background: #292929; color: #bbb; font-size: 5px; }
.thumb { height: 139px; margin-top: 40px; background: linear-gradient(90deg, #303030, #262626); }
.props { margin-top: 7px; border-right: 1px solid #282828; }
.props i { display: block; height: 15px; border-top: 1px solid #2a2a2a; font-style: normal; line-height: 10px; text-align: center; }
.props i:nth-child(even) { background: #202020; height: 14px; }
.dockfoot { flex: 1; margin-top: 7px; border: 1px solid #121212; border-left: 0; border-bottom: 0; }

.tabs { height: 22px; flex: none; display: flex; background: #1a1a1a; }
.tab { display: flex; align-items: center; border: 1px solid #101010; border-top: 0; font-weight: 700; }
.start { padding: 0 6px 0 3px; gap: 7px; }
.doc { padding: 0 6px 0 4px; gap: 9px; background: #1e1e1e; }
.start .tabx { margin-left: 3px; }
.tabname { color: #ececec; white-space: nowrap; }

.status { height: 22px; flex: none; display: flex; align-items: center; justify-content: flex-end; padding: 0 2px 0 0; white-space: nowrap; }
.area { margin-right: 28px; }
.stat { gap: 4px; }
.chip { width: 10px; height: 9px; background: linear-gradient(#5b8fd4, #2f5f9f); }
.notes { margin-right: 15px; }
.notes svg { margin-left: 12px; }
.pad { margin-right: 13px; }
.pad svg:last-child { margin-left: 10px; }
.stat:last-child { gap: 6px; }

/* Terminal panel */
.panel { display: flex; flex-direction: column; min-height: 0; }
.panelhead { height: 30px; flex: none; display: flex; align-items: center; gap: 7px; padding-left: 17px; background: #3e3f41; color: #c9c9c9; font: 10px "Noto Sans CJK SC", sans-serif; }
.panelhead svg { color: #f0f0f0; }
.panelbar { height: 18px; flex: none; display: flex; background: #1e88b6; color: #e8f3f8; font: 11px/19px "DejaVu Sans", "Noto Sans CJK SC", sans-serif; }
.panelbar span { flex: 1; text-align: center; }
.swatch { width: 19px; border-right: 1px solid #176d93; }
.termwrap { flex: 1; min-height: 0; display: flex; background: #242424; }
.term { flex: 1; min-width: 0; overflow: hidden; padding: 3px 0 0 16px; font: 12px/17px "DejaVu Sans Mono", "Noto Sans CJK SC", monospace; color: #d4d4d4; white-space: nowrap; }
.part { display: flex; align-items: center; height: 17px; margin-left: -16px; font-size: 12px; color: #ececec; }
.part b { font-size: 15px; }
.bullet { width: 8px; height: 8px; margin-right: 8px; border-radius: 50%; background: #fff; }
.term h4 { height: 17px; margin: 17px 0 16px; font-size: 15px; line-height: 15px; color: #ececec; }
.term table { table-layout: fixed; width: 0; border-collapse: collapse; font-size: 12px; }
.term tr { height: 16px; }
.term tr:nth-of-type(even) { height: 17px; }
.term td, .term th { padding: 0; text-align: left; font-weight: 400; line-height: 14px; }
.term th { font-size: 14px; line-height: 12px; padding-left: 7px; }
.term th.en { font-size: 12px; line-height: 14px; }
.term th span { font-size: 12px; margin-left: 10px; }
.term td.v { padding-left: 7px; }
.term td.strong { font-weight: 700; color: #ececec; }
.bar { width: 8px; }
.w37 { width: 37px; }
.w45 { width: 45px; }
.w52 { width: 52px; }
.w60 { width: 60px; }
.w67 { width: 67px; }
.w75 { width: 75px; }
.w97 { width: 97px; }
.w112 { width: 112px; }
.plan { margin: 16px 0 0 32px; }
.plan .top { display: block; padding-left: 20px; }
.plan .row { display: flex; align-items: center; gap: 10px; margin: 6px 0; }
.rect { width: 70px; height: 36px; border: 2px solid #e2e2e2; }
.plan figcaption { padding-left: 13px; }
.plan b { font-size: 14px; font-weight: 400; }
.gutter { width: 9px; flex: none; display: flex; align-items: flex-end; justify-content: center; padding-bottom: 7px; background: #444; }
.gutter i { width: 5px; height: 30px; border-radius: 3px; background: #989898; }

/* Icon rail */
.rail { background: #3e4043; border-left: 1px solid #2a2b2d; color: #cfcfcf; }
.group { display: flex; flex-direction: column; align-items: center; gap: 8px; padding: 7px 0; border-bottom: 1px solid #2c2d2f; }
.group:first-child { padding-top: 8px; }
.group:last-child { border-bottom: 0; }
.rail button { width: 21px; height: 22px; border-radius: 3px; }
.rail svg { width: 15px; height: 15px; }
.rail .on { background: #4f9bd6; color: #fff; }
.rail .avatar { width: 18px; height: 18px; margin: 1px 0 3px; border-radius: 50%; background: #4f9bd6; color: #fff; font: 10px Inter, sans-serif; }

/* Overlays */
.brand { position: absolute; right: 7px; bottom: 5px; display: flex; align-items: center; gap: 1px; color: #0b429b; font: 500 21px/30px "Noto Sans CJK SC", sans-serif; }
.marks { position: absolute; inset: 0; overflow: hidden; pointer-events: none; display: grid; grid-template-columns: repeat(4, 300px); grid-auto-rows: 150px; padding: 80px 0 0 71px; }
.marks span { width: 105px; height: 15px; transform: rotate(-19deg); color: rgba(100, 100, 100, .17); font: 12px/15px "Liberation Serif", serif; }
```
